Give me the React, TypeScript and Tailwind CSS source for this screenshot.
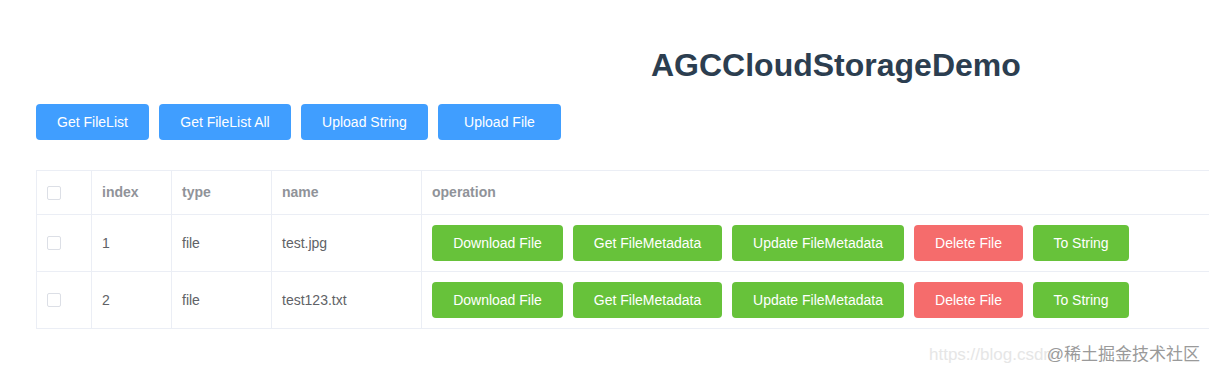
import React from 'react';

const topButtons = [
  { label: 'Get FileList', w: 'w-[113px]' },
  { label: 'Get FileList All', w: 'w-[132px]' },
  { label: 'Upload String', w: 'w-[127px]' },
  { label: 'Upload File', w: 'w-[123px]' },
];

const files = [
  { index: 1, type: 'file', name: 'test.jpg' },
  { index: 2, type: 'file', name: 'test123.txt' },
];

const ops = [
  { label: 'Download File', w: 'w-[131px]', danger: false },
  { label: 'Get FileMetadata', w: 'w-[149px]', danger: false },
  { label: 'Update FileMetadata', w: 'w-[172px]', danger: false },
  { label: 'Delete File', w: 'w-[109px]', danger: true },
  { label: 'To String', w: 'w-[96px]', danger: false },
];

function Checkbox() {
  return <span className="block w-[14px] h-[14px] border border-[#dcdfe6] rounded-[2px] bg-white" />;
}

export default function App() {
  return (
    <div
      className="relative w-[1209px] h-[373px] overflow-hidden bg-white text-[14px]"
      style={{ fontFamily: '"Liberation Sans", Arial, sans-serif' }}
    >
      <div className="w-[1320px] pt-[47px] pl-[36px]">
        {/* title */}
        <h1 className="pl-[615px] text-[32px] leading-[37px] font-bold text-[#2c3e50]">AGCCloudStorageDemo</h1>

        {/* action buttons */}
        <div className="flex gap-[10px] mt-5">
          {topButtons.map(b => (
            <button
              key={b.label}
              className={`${b.w} h-9 flex items-center justify-center rounded-[4px] bg-[#409eff] text-white text-[14px] leading-none`}
            >
              {b.label}
            </button>
          ))}
        </div>

        {/* file table */}
        <div className="mt-[30px] border-t border-l border-[#ebeef5]">
          <div className="flex h-[44px] border-b border-[#ebeef5] text-[#909399] font-bold">
            <div className="w-[55px] shrink-0 border-r border-[#ebeef5] flex items-center pl-[10px]">
              <Checkbox />
            </div>
            <div className="w-[80px] shrink-0 border-r border-[#ebeef5] flex items-center pl-[10px]">index</div>
            <div className="w-[100px] shrink-0 border-r border-[#ebeef5] flex items-center pl-[10px]">type</div>
            <div className="w-[150px] shrink-0 border-r border-[#ebeef5] flex items-center pl-[10px]">name</div>
            <div className="flex-1 flex items-center pl-[10px]">operation</div>
          </div>
          {files.map(f => (
            <div key={f.index} className="flex h-[57px] border-b border-[#ebeef5] text-[#606266]">
              <div className="w-[55px] shrink-0 border-r border-[#ebeef5] flex items-center pl-[10px]">
                <Checkbox />
              </div>
              <div className="w-[80px] shrink-0 border-r border-[#ebeef5] flex items-center pl-[10px]">{f.index}</div>
              <div className="w-[100px] shrink-0 border-r border-[#ebeef5] flex items-center pl-[10px]">{f.type}</div>
              <div className="w-[150px] shrink-0 border-r border-[#ebeef5] flex items-center pl-[10px]">{f.name}</div>
              <div className="flex-1 flex items-center gap-[10px] pl-[10px]">
                {ops.map(o => (
                  <button
                    key={o.label}
                    className={`${o.w} h-9 flex items-center justify-center rounded-[4px] text-white text-[14px] leading-none ${
                      o.danger ? 'bg-[#f56c6c]' : 'bg-[#67c23a]'
                    }`}
                  >
                    {o.label}
                  </button>
                ))}
              </div>
            </div>
          ))}
        </div>
      </div>

      {/* watermark */}
      <div
        className="absolute left-[929px] top-[343px] flex items-center whitespace-nowrap text-[17px] leading-[24px]"
        style={{ fontFamily: '"Liberation Sans", "Noto Sans CJK SC", sans-serif' }}
      >
        <span className="text-[#e6e6e6]">https://blog.csdn</span>
        <span className="-ml-[6px] text-[#9a9a9a]">@稀土掘金技术社区</span>
      </div>
    </div>
  );
}
